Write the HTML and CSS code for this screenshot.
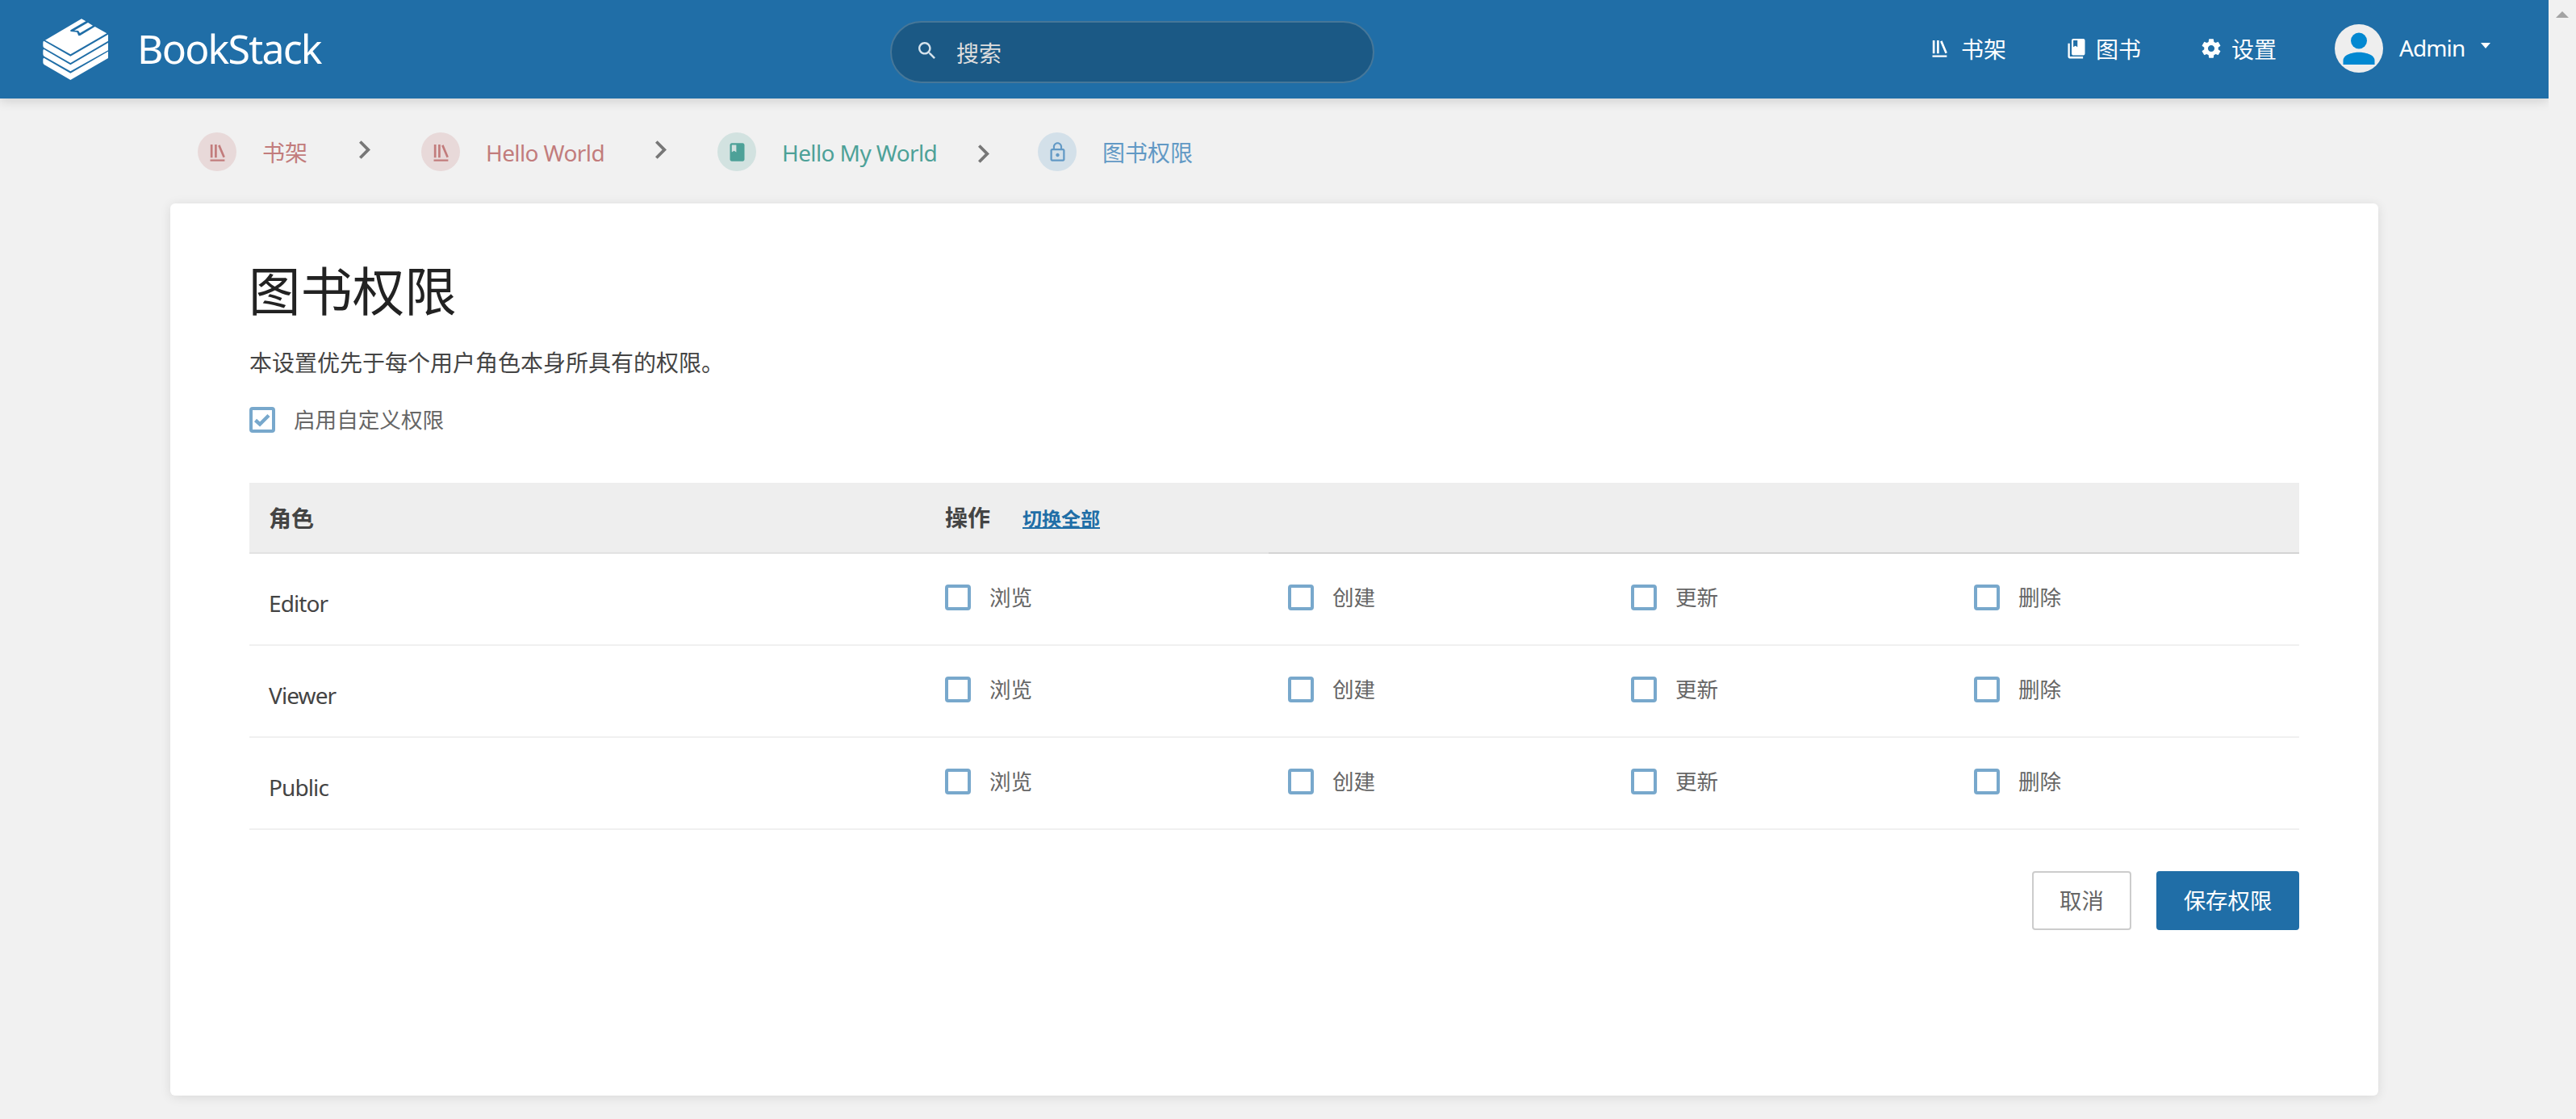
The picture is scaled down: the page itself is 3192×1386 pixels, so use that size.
FILE: index.html
```html
<!DOCTYPE html>
<html lang="zh-CN">
<head>
  <meta charset="UTF-8" />
  <meta name="viewport" content="width=device-width, initial-scale=1" />
  <title>图书权限 | BookStack</title>
  <link rel="stylesheet" href="styles.css">
</head>
<body>
  <!-- Shared icons -->
  <svg class="sprite" aria-hidden="true">
    <symbol id="icon-shelf" viewBox="0 0 24 24"><path d="M4 20.058h15.892V22H4zM6.658 3.643V18h-2.38V3.643zM11.326 3.643V18H8.947V3.643zM14.722 3.856l5.613 13.214-2.19.93-5.613-13.214z"/></symbol>
    <symbol id="icon-books" viewBox="0 0 24 24"><path d="M19.252 1.708H8.663a1.77 1.77 0 0 0-1.765 1.764v14.12c0 .97.794 1.764 1.765 1.764h10.59a1.77 1.77 0 0 0 1.764-1.765V3.472a1.77 1.77 0 0 0-1.765-1.764zM8.663 3.472h4.412v7.06L10.87 9.208l-2.206 1.324z"/><path d="M2.966 6.61v14c0 1.1.9 2 2 2h14v-2h-14v-14z"/></symbol>
    <symbol id="icon-book" viewBox="0 0 24 24"><path d="M18 2H6c-1.1 0-2 .9-2 2v16c0 1.1.9 2 2 2h12c1.1 0 2-.9 2-2V4c0-1.1-.9-2-2-2zM6 4h5v8l-2.500-1.500L6 12V4z"/></symbol>
    <symbol id="icon-settings" viewBox="0 0 24 24"><path d="M19.43 12.98c.04-.32.07-.64.07-.98s-.03-.66-.07-.98l2.11-1.65c.19-.15.24-.42.12-.64l-2-3.46c-.12-.22-.39-.3-.61-.22l-2.49 1c-.52-.4-1.08-.73-1.69-.98l-.38-2.65C14.46 2.18 14.25 2 14 2h-4c-.25 0-.46.18-.49.42l-.38 2.65c-.61.25-1.17.59-1.69.98l-2.49-1c-.23-.09-.49 0-.61.22l-2 3.46c-.13.22-.07.49.12.64l2.11 1.65c-.04.32-.07.65-.07.98s.03.66.07.98l-2.11 1.65c-.19.15-.24.42-.12.64l2 3.46c.12.22.39.3.61.22l2.49-1c.52.4 1.08.73 1.69.98l.38 2.65c.03.24.24.42.49.42h4c.25 0 .46-.18.49-.42l.38-2.65c.61-.25 1.17-.59 1.69-.98l2.49 1c.23.09.49 0 .61-.22l2-3.46c.12-.22.07-.49-.12-.64l-2.11-1.65zM12 15.5c-1.93 0-3.5-1.57-3.5-3.5s1.57-3.5 3.5-3.5 3.5 1.57 3.5 3.5-1.57 3.5-3.5 3.5z"/></symbol>
    <symbol id="icon-lock" viewBox="0 0 24 24"><path d="M12 17c1.1 0 2-.9 2-2s-.9-2-2-2-2 .9-2 2 .9 2 2 2zm6-9h-1V6c0-2.76-2.24-5-5-5S7 3.24 7 6v2H6c-1.1 0-2 .9-2 2v10c0 1.1.9 2 2 2h12c1.1 0 2-.9 2-2V10c0-1.1-.9-2-2-2zM8.9 6c0-1.71 1.39-3.1 3.1-3.1s3.100 1.390 3.100 3.100v2H8.900V6zM18 20H6V10h12v10z"/></symbol>
    <symbol id="icon-chevron" viewBox="8.59 6 7.41 12"><path d="M10 6L8.59 7.41 13.17 12l-4.58 4.59L10 18l6-6z"/></symbol>
    <symbol id="icon-search" viewBox="3 3 17.5 17.5"><path d="M15.5 14h-.79l-.28-.27C15.41 12.59 16 11.11 16 9.5 16 5.91 13.09 3 9.5 3S3 5.91 3 9.5 5.91 16 9.5 16c1.61 0 3.09-.59 4.23-1.57l.27.28v.79l5 4.99L20.49 19l-4.99-5zm-6 0C7.01 14 5 11.99 5 9.5S7.01 5 9.5 5 14 7.01 14 9.5 11.99 14 9.5 14z"/></symbol>
  </svg>

  <div class="page">
    <header class="header">
      <a class="logo" href="#">
        <svg class="logo-image" viewBox="159 69 243 228">
          <path d="M168 149L303 70l16 9-57 33v5l24 2 6 14 6-1 55-33 44 25-135 78z"/>
          <path d="M327 84l18 11-48 28-6-9-15-1z"/>
          <path d="M163 152l99 57 140-81v24L262 234l-98-56q-4-3-4-8v-12q0-4 3-6z"/>
          <path d="M163 183l99 58 140-82v28L262 265l-98-56q-4-3-4-8v-12q0-4 3-6z"/>
          <path d="M163 215l99 57 140-81v25L262 297l-98-57q-4-3-4-8v-11q0-4 3-6z"/>
        </svg>
        <span class="logo-text">BookStack</span>
      </a>

      <form class="search-box">
        <svg class="search-icon"><use href="#icon-search"/></svg>
        <span class="search-text">搜索</span>
      </form>

      <nav class="links">
        <a href="#" class="link-shelves"><svg><use href="#icon-shelf"/></svg>书架</a>
        <a href="#" class="link-books"><svg><use href="#icon-books"/></svg>图书</a>
        <a href="#" class="link-settings"><svg><use href="#icon-settings"/></svg>设置</a>
        <div class="user">
          <svg class="avatar" viewBox="0 0 60 60">
            <circle cx="30" cy="30" r="30" fill="#eee"/>
            <circle cx="30" cy="20.500" r="10" fill="#0288d1"/>
            <path d="M10.500 50v-5c0-8 13-10.300 19.500-10.300S49.500 37 49.500 45v5z" fill="#0288d1"/>
          </svg>
          <span class="name">Admin</span>
          <span class="caret"></span>
        </div>
      </nav>
    </header>

    <main class="container">
      <nav class="breadcrumbs">
        <a href="#" class="crumb shelf"><span class="crumb-icon"><svg><use href="#icon-shelf"/></svg></span>书架</a>
        <svg class="separator sep-1"><use href="#icon-chevron"/></svg>
        <a href="#" class="crumb shelf"><span class="crumb-icon"><svg><use href="#icon-shelf"/></svg></span><span class="world">Hello World</span></a>
        <svg class="separator sep-2"><use href="#icon-chevron"/></svg>
        <a href="#" class="crumb book"><span class="crumb-icon"><svg><use href="#icon-book"/></svg></span><span class="my-world">Hello My World</span></a>
        <svg class="separator sep-3"><use href="#icon-chevron"/></svg>
        <a href="#" class="crumb lock"><span class="crumb-icon"><svg><use href="#icon-lock"/></svg></span>图书权限</a>
      </nav>

      <section class="card">
        <h1>图书权限</h1>
        <p class="intro">本设置优先于每个用户角色本身所具有的权限。</p>
        <label class="toggle">
          <span class="box"><svg viewBox="0 0 20 20"><path d="M1.500 10.500l5.500 5L18 4.500" fill="none" stroke="#78a8cc" stroke-width="4.500"/></svg></span>
          启用自定义权限
        </label>

        <table class="permissions">
          <thead>
            <tr>
              <th class="role">角色</th>
              <th class="action">操作<a href="#" class="toggle-all">切换全部</a></th>
              <th class="rest action"></th>
              <th class="rest action"></th>
              <th class="rest"></th>
            </tr>
          </thead>
          <tbody>
            <tr>
              <td class="role">Editor</td>
              <td><label class="toggle"><span class="box"></span>浏览</label></td>
              <td><label class="toggle"><span class="box"></span>创建</label></td>
              <td><label class="toggle"><span class="box"></span>更新</label></td>
              <td><label class="toggle"><span class="box"></span>删除</label></td>
            </tr>
            <tr>
              <td class="role">Viewer</td>
              <td><label class="toggle"><span class="box"></span>浏览</label></td>
              <td><label class="toggle"><span class="box"></span>创建</label></td>
              <td><label class="toggle"><span class="box"></span>更新</label></td>
              <td><label class="toggle"><span class="box"></span>删除</label></td>
            </tr>
            <tr>
              <td class="role">Public</td>
              <td><label class="toggle"><span class="box"></span>浏览</label></td>
              <td><label class="toggle"><span class="box"></span>创建</label></td>
              <td><label class="toggle"><span class="box"></span>更新</label></td>
              <td><label class="toggle"><span class="box"></span>删除</label></td>
            </tr>
          </tbody>
        </table>

        <div class="actions">
          <a href="#" class="button outline">取消</a>
          <button type="button" class="button">保存权限</button>
        </div>
      </section>
    </main>
  </div>

  <aside class="scrollbar" aria-hidden="true"><span class="scroll-up"></span></aside>
</body>
</html>
```

FILE: styles.css
```css
:root {
  --primary: #206ea7;
  --check: #78a8cc;
  --text: #444;
}

* {
  box-sizing: border-box;
}

body {
  margin: 0;
  display: flex;
  height: 1386px;
  overflow: hidden;
  background: #f1f1f1;
  color: var(--text);
  font-family: "Noto Sans", "Noto Sans CJK SC", sans-serif;
  font-size: 28px;
  line-height: 40px;
}

a {
  color: inherit;
  text-decoration: none;
}

svg {
  display: block;
  flex: none;
  fill: currentColor;
}

.sprite {
  position: absolute;
  width: 0;
  height: 0;
}

.page {
  width: 3158px;
}

.scrollbar {
  width: 34px;
  padding: 14px 9px;
  background: #f1f1f1;
}

.scroll-up {
  display: block;
  width: 16px;
  height: 8px;
  background: #a3a3a3;
  clip-path: polygon(50% 0, 100% 100%, 0 100%);
}

/* Header */
.header {
  display: flex;
  height: 122px;
  background: var(--primary);
  color: #fff;
  box-shadow: 0 2px 14px rgba(0, 0, 0, 0.16);
}

.logo {
  display: flex;
  width: 1103px;
  padding: 23px 0 0 53px;
}

.logo-image {
  width: 81px;
  height: 76px;
}

.logo-text {
  margin: 1px 0 0 36px;
  font-size: 50px;
  line-height: 72px;
  letter-spacing: -1.8px;
}

.search-box {
  display: flex;
  width: 600px;
  height: 77px;
  margin-top: 26px;
  padding: 0 32px;
  background: #1b5985;
  border: 2px solid #467799;
  border-radius: 40px;
}

.search-icon {
  width: 21px;
  height: 21px;
  margin: 24px 26px 0 1px;
  color: #d6e3ed;
}

.search-text {
  margin-top: 18px;
  color: #ddd;
}

.links {
  display: flex;
  padding-left: 687px;
}

.links a {
  display: flex;
  padding-top: 41px;
}

.links a svg {
  width: 28px;
  height: 28px;
  margin-top: 5px;
}

.links .link-shelves {
  width: 169px;
}

.links .link-shelves svg {
  width: 27px;
  height: 27px;
  margin-right: 13px;
}

.links .link-books {
  width: 167px;
}

.links .link-books svg {
  margin-right: 10px;
}

.links .link-settings {
  width: 167px;
}

.links .link-settings svg {
  width: 28px;
  margin-right: 11px;
}

.user {
  display: flex;
}

.avatar {
  width: 60px;
  height: 60px;
  margin-top: 30px;
}

.name {
  width: 82px;
  margin: 39px 19px 0 20px;
  letter-spacing: -0.9px;
}

.caret {
  width: 12px;
  height: 7px;
  margin-top: 53px;
  background: #fff;
  clip-path: polygon(0 0, 100% 0, 50% 100%);
}

/* Breadcrumbs */
.container {
  width: 2736px;
  margin: 0 auto;
}

.breadcrumbs {
  display: flex;
  height: 130px;
  padding: 42px 0 0 34px;
}

.crumb {
  display: flex;
  line-height: 50px;
  white-space: nowrap;
}

.crumb-icon {
  display: flex;
  align-items: center;
  justify-content: center;
  width: 48px;
  height: 48px;
  margin-right: 32px;
  border-radius: 50%;
}

.crumb-icon svg {
  width: 27px;
  height: 27px;
}

.shelf {
  color: #c27c7c;
}

.shelf .crumb-icon {
  background: #e8d9d9;
}

.book {
  color: #4da198;
}

.book .crumb-icon {
  background: #d2e2e0;
}

.lock {
  color: #6299c5;
}

.lock .crumb-icon {
  background: #d3e0e9;
}

.world {
  width: 145px;
  letter-spacing: -0.6px;
}

.my-world {
  width: 192px;
  letter-spacing: -0.6px;
}

.separator {
  width: 14px;
  height: 23px;
  margin-top: 10px;
  color: #777;
}

.sep-1 {
  margin-left: 64px;
  margin-right: 63px;
}

.sep-2 {
  margin-left: 65px;
  margin-right: 63px;
}

.sep-3 {
  margin-top: 15px;
  margin-left: 51px;
  margin-right: 60px;
}

/* Card */
.card {
  height: 1105px;
  padding: 66px 98px 0;
  background: #fff;
  border-radius: 6px;
  box-shadow: 0 2px 14px rgba(0, 0, 0, 0.1);
}

h1 {
  margin: 0 0 0 -1px;
  color: #222;
  font-size: 64.4px;
  font-weight: 400;
  line-height: 84px;
}

.intro {
  margin: 27px 0 0;
}

.toggle {
  display: flex;
  align-items: center;
  height: 32px;
  color: #666;
  font-size: 26.6px;
}

.intro + .toggle {
  margin-top: 35px;
}

.box {
  width: 32px;
  height: 32px;
  margin-right: 23px;
  padding: 2px;
  border: 4px solid var(--check);
  border-radius: 4px;
}

.box svg {
  width: 20px;
  height: 20px;
}

.permissions {
  width: 2540px;
  margin-top: 62px;
  border-collapse: separate;
  border-spacing: 0;
  table-layout: fixed;
}

.permissions th {
  height: 88px;
  padding: 1px 24px 0;
  background: #eee;
  border-bottom: 2px solid #e2e2e2;
  font-weight: 700;
  text-align: left;
}

.permissions th.rest {
  border-bottom-color: #d4d4d4;
}

.permissions .role {
  width: 838px;
}

.permissions .action {
  width: 425px;
}

.permissions td {
  height: 114px;
  padding: 0 24px 4px;
  border-bottom: 2px solid #f0f0f0;
}

.permissions td.role {
  padding: 9px 24px 0;
  letter-spacing: -0.9px;
}

.toggle-all {
  margin-left: 40px;
  color: var(--primary);
  font-size: 24px;
  text-decoration: underline;
  text-decoration-thickness: 2px;
}

.actions {
  display: flex;
  justify-content: flex-end;
  gap: 31px;
  margin-top: 51px;
}

.button {
  width: 177px;
  height: 73px;
  padding: 0;
  background: var(--primary);
  border: 2px solid var(--primary);
  border-radius: 4px;
  color: #fff;
  font-family: inherit;
  font-size: 27.4px;
  line-height: 70px;
  text-align: center;
}

.button.outline {
  width: 123px;
  background: #fff;
  border-color: #ccc;
  color: #666;
}
```
